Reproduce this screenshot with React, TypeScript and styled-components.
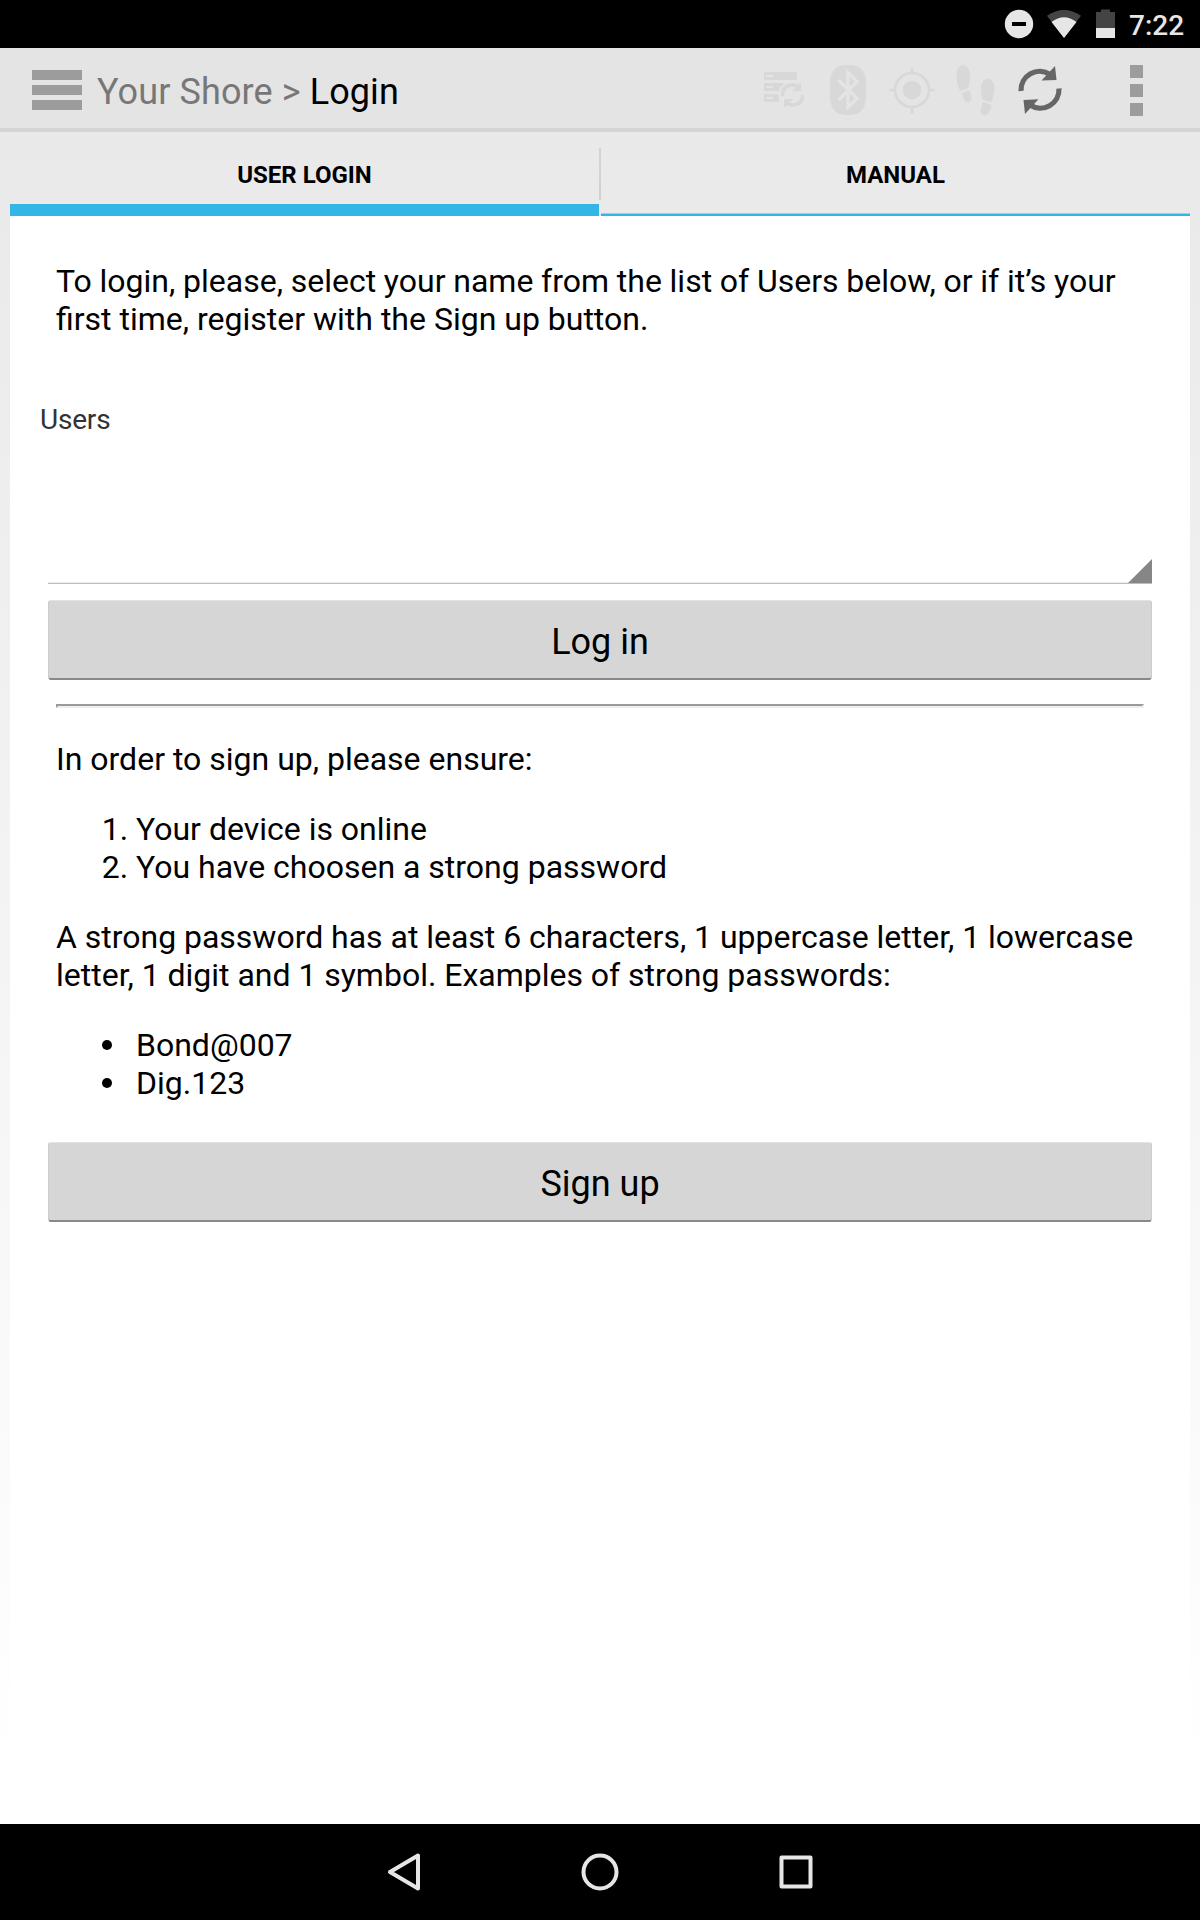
import React from "react";
import styled, { createGlobalStyle } from "styled-components";

const GlobalStyle = createGlobalStyle`
  * { box-sizing: border-box; }
  body { margin: 0; font-family: Roboto, sans-serif; color: #000; }
`;

const Screen = styled.div`
  width: 1200px;
  height: 1920px;
  display: flex;
  flex-direction: column;
  overflow: hidden;
  background: #fff;
`;

const StatusBar = styled.div`
  height: 48px;
  flex: none;
  display: flex;
  justify-content: flex-end;
  align-items: center;
  padding-right: 14px;
  background: #000;
`;

const Clock = styled.span`
  width: 57px;
  margin-left: 12px;
  font-size: 28px;
  font-weight: 500;
  line-height: 48px;
  padding-top: 3px;
  color: #e6e6e6;
  white-space: nowrap;
`;

const Body = styled.div`
  flex: 1;
  display: flex;
  flex-direction: column;
  background: linear-gradient(#e8e8e8, #ffffff 97%);
`;

const ActionBar = styled.header`
  height: 84px;
  flex: none;
  display: flex;
  align-items: center;
  padding: 4px 57px 0 32px;
  background: #e4e4e4;
  border-bottom: 4px solid #d4d4d4;
`;

const MenuButton = styled.div`
  width: 50px;
  display: grid;
  gap: 5px;
`;

const MenuBar = styled.div`
  height: 10px;
  background: #9c9c9c;
`;

const Title = styled.h1`
  flex: 1;
  margin: 0 0 0 15px;
  padding-top: 4px;
  font-size: 36px;
  font-weight: 400;
  line-height: 44px;
  letter-spacing: 0.1px;
  color: #777;
  white-space: nowrap;
`;

const Current = styled.span`
  color: #000;
`;

const Actions = styled.div`
  display: flex;
  align-items: center;
`;

const ActionStrip = styled.svg`
  display: block;
  margin-top: -4px;
`;

const Overflow = styled.div`
  display: grid;
  gap: 6px;
  margin-left: 68px;
`;

const Dot = styled.div`
  width: 13px;
  height: 13px;
  background: #9c9c9c;
`;

const Tabs = styled.nav`
  height: 84px;
  flex: none;
  display: flex;
  margin: 0 10px;
`;

const Tab = styled.div<{ $active?: boolean }>`
  flex: 1;
  display: flex;
  justify-content: center;
  height: 84px;
  padding-top: 28px;
  font-size: 24px;
  line-height: 30px;
  font-weight: 700;
  border-bottom: ${(p) => (p.$active ? "12px" : "2px")} solid #33b5e5;
  ${(p) => !p.$active && "box-shadow: inset 0 -1px #9fcfe2;"}
`;

const TabDivider = styled.div`
  width: 2px;
  height: 52px;
  margin-top: 16px;
  background: #d2d2d2;
`;

const Panel = styled.main`
  flex: 1;
  margin: 0 10px;
  padding: 46px 38px 0;
  background: #fff;
`;

const Prose = styled.div`
  padding: 0 8px;
  font-size: 32px;
  line-height: 38px;
`;

const Paragraph = styled.p`
  margin: 0;
`;

const Line = styled.span<{ $tight?: number }>`
  display: block;
  white-space: nowrap;
  word-spacing: ${(p) => -(p.$tight ?? 0)}px;
`;

const NumberedList = styled.ol`
  margin: 32px 0;
  padding-left: 80px;
`;

const BulletList = styled.ul`
  margin: 32px 0;
  padding-left: 80px;
  list-style: none;
`;

const Bullet = styled.li`
  &::before {
    content: "";
    display: inline-block;
    width: 10px;
    height: 10px;
    margin: 0 24px 0 -34px;
    border-radius: 50%;
    background: #000;
    vertical-align: 6px;
  }
`;

const FieldLabel = styled.label`
  display: block;
  margin: 65px 0 0 -8px;
  font-size: 28px;
  line-height: 34px;
  letter-spacing: -0.2px;
  color: #333;
`;

const Spinner = styled.div`
  height: 147px;
  display: flex;
  justify-content: flex-end;
  align-items: flex-end;
  border-bottom: 1px solid #bdbdbd;
  box-shadow: inset 0 -1px #eee;
`;

const SpinnerCorner = styled.svg`
  display: block;
`;

const Button = styled.div<{ $gap: number }>`
  height: 80px;
  display: flex;
  align-items: center;
  justify-content: center;
  margin-top: ${(p) => p.$gap}px;
  padding-top: 4px;
  font-size: 36px;
  background: #d6d6d6;
  border: 1px solid #ccc;
  border-top: 1px solid #e2e2e2;
  border-bottom: 2px solid #888;
  border-radius: 3px;
`;

const Rule = styled.hr`
  height: 4px;
  margin: 24px 8px 32px;
  border: 2px solid;
  border-color: #9a9a9a #eee #eee #9a9a9a;
`;

const NavBar = styled.footer`
  height: 96px;
  flex: none;
  display: flex;
  justify-content: center;
  align-items: center;
  gap: 158px;
  background: #000;
`;

const StatusIcons = () => (
  <svg width="114" height="48" viewBox="1003 0 114 48">
    <circle cx="1019" cy="24" r="14.2" fill="#e6e6e6" />
    <rect x="1012" y="22" width="14" height="4" fill="#000" />
    <path d="M1047 15.8Q1064 4 1081 15.8L1064 38Z" fill="#444" />
    <path d="M1051.5 22Q1064 12.500 1076.500 22L1064 38Z" fill="#e6e6e6" />
    <path d="M1096 12h5V9.500h9V12h5v26h-19Z" fill="#444" />
    <rect x="1096" y="28" width="19" height="10" fill="#e6e6e6" />
  </svg>
);

const ActionIcons = () => (
  <ActionStrip width="302" height="80" viewBox="760 48 302 80">
    <g fill="#d8d8d8">
      <path fillRule="evenodd" d="M764 72h33v8h-33ZM766.500 75v2h6.500v-2Z" />
      <path fillRule="evenodd" d="M764 83h21q-5 3-6 8h-15ZM766.500 86v2h6.500v-2Z" />
      <path fillRule="evenodd" d="M764 94h14l1.500 8H764ZM766.500 97v2h6.500v-2Z" />
      <path d="M830 85C830 70 836 65 848 65S866 70 866 85V95C866 110 860 115 848 115S830 110 830 95Z" />
      <circle cx="912" cy="90" r="9.300" />
      <path d="M956.500 76c0-15 13.500-14 13.500 0q0 7-2 12l-8 3q-3.500-8-3.500-15ZM961.500 93l8-2.500q3 8 1.500 10c-2 3-6 2-7-1Z" />
      <path d="M994.500 89c0-14-13.500-14-13.500 0q0 7 1.500 10.500l8.500 3q3.500-7 3.500-13.500ZM982.500 102l9 3q-1.500 7-3.500 9c-3 3-8 0-7.500-3Z" />
    </g>
    <g fill="none" stroke="#d8d8d8">
      <path d="M782.500 96q0-11 10-11q4 0 6.500 2.500M802.500 95q0 10-10 10q-4 0-6.500-2.500" strokeWidth="3.400" />
      <circle cx="912" cy="90" r="17" strokeWidth="2.600" />
      <path d="M912 67v7M912 106v8M889 90h7M928 90h7" strokeWidth="2.600" />
    </g>
    <path d="M801 82v9h-9ZM784 108v-9h9Z" fill="#d8d8d8" />
    <path d="M838.500 80l18.500 18.500-9 9V72.500l9 9L838.500 100" fill="none" stroke="#e4e4e4" strokeWidth="3.200" />
    <path d="M1021 91A18.700 18.700 0 0 1 1050 74.500M1059 88.500A18.700 18.700 0 0 1 1030 105" fill="none" stroke="#666" strokeWidth="5.200" />
    <path d="M1055 66l1.500 14-15 .5ZM1025 114l-1.500-14 15-.7Z" fill="#666" />
  </ActionStrip>
);

const BackIcon = () => (
  <svg width="36" height="40" viewBox="0 0 36 40" fill="none" stroke="#e6e6e6" strokeWidth="4" strokeLinejoin="round">
    <path d="M4 20L32 3.500v33Z" />
  </svg>
);

const HomeIcon = () => (
  <svg width="40" height="40" viewBox="0 0 40 40" fill="none" stroke="#e6e6e6" strokeWidth="4">
    <circle cx="20" cy="20" r="16.500" />
  </svg>
);

const RecentsIcon = () => (
  <svg width="36" height="40" viewBox="0 0 36 40" fill="none" stroke="#e6e6e6" strokeWidth="4" strokeLinejoin="round">
    <rect x="3.500" y="5.500" width="29" height="29" />
  </svg>
);

export default function App() {
  return (
    <>
      <GlobalStyle />
      <Screen>
        <StatusBar>
          <StatusIcons />
          <Clock>7:22</Clock>
        </StatusBar>
        <Body>
          <ActionBar>
            <MenuButton>
              <MenuBar />
              <MenuBar />
              <MenuBar />
            </MenuButton>
            <Title>
              Your Shore &gt; <Current>Login</Current>
            </Title>
            <Actions>
              <ActionIcons />
              <Overflow>
                <Dot />
                <Dot />
                <Dot />
              </Overflow>
            </Actions>
          </ActionBar>
          <Tabs>
            <Tab $active>USER LOGIN</Tab>
            <TabDivider />
            <Tab>MANUAL</Tab>
          </Tabs>
          <Panel>
            <Prose>
              <Paragraph>
                <Line $tight={0.2}>To login, please, select your name from the list of Users below, or if it’s your</Line>
                <Line>first time, register with the Sign up button.</Line>
              </Paragraph>
            </Prose>
            <FieldLabel>Users</FieldLabel>
            <Spinner>
              <SpinnerCorner width="24" height="24" viewBox="0 0 24 24">
                <path d="M24 0v24H0Z" fill="#868686" />
              </SpinnerCorner>
            </Spinner>
            <Button $gap={16}>Log in</Button>
            <Rule />
            <Prose>
              <Paragraph>In order to sign up, please ensure:</Paragraph>
              <NumberedList>
                <li>Your device is online</li>
                <li>You have choosen a strong password</li>
              </NumberedList>
              <Paragraph>
                <Line $tight={0.1}>A strong password has at least 6 characters, 1 uppercase letter, 1 lowercase</Line>
                <Line $tight={0.1}>letter, 1 digit and 1 symbol. Examples of strong passwords:</Line>
              </Paragraph>
              <BulletList>
                <Bullet>Bond@007</Bullet>
                <Bullet>Dig.123</Bullet>
              </BulletList>
            </Prose>
            <Button $gap={40}>Sign up</Button>
          </Panel>
        </Body>
        <NavBar>
          <BackIcon />
          <HomeIcon />
          <RecentsIcon />
        </NavBar>
      </Screen>
    </>
  );
}
